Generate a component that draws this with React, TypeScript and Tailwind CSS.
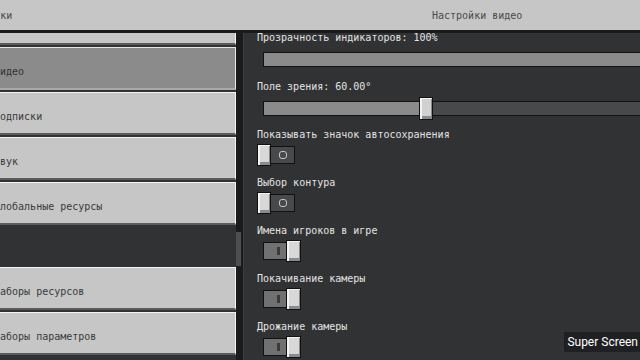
const mono = "font-['DejaVu_Sans_Mono','Liberation_Mono',monospace]";

type NavItem = { label: string; selected?: boolean };

const topItems: NavItem[] = [
  { label: "Видео", selected: true },
  { label: "Подписки" },
  { label: "Звук" },
  { label: "Глобальные ресурсы" },
];

const bottomItems: NavItem[] = [{ label: "Наборы ресурсов" }, { label: "Наборы параметров" }];

function NavButton({ label, selected }: NavItem) {
  return (
    <div
      className={
        selected
          ? "flex h-[43px] items-center overflow-hidden border-t border-r border-b-2 border-t-[#e6e6e6] border-r-[#e6e6e6] border-b-[#a9a9a9] bg-[#8b8b8b] text-[#333333]"
          : "flex h-[43px] items-center overflow-hidden border-t border-r border-b-2 border-t-[#f4f4f4] border-r-[#f4f4f4] border-b-[#5a5b5c] bg-[#c6c6c6] text-[#3a3a3a]"
      }
    >
      <span className="-ml-[6px] pt-[8px] whitespace-nowrap">{label}</span>
    </div>
  );
}

function Label({ text }: { text: string }) {
  return <div className="h-[12px] whitespace-nowrap text-[#e4e4e4]">{text}</div>;
}

function Slider({ fill, handleAt }: { fill: number; handleAt?: number }) {
  return (
    <div className="relative ml-[6px] mt-[4px] h-[23px] w-[420px]">
      <div className="absolute left-0 right-0 top-[4px] flex h-[15px] border border-[#111111] bg-[#48494a]">
        <div className="h-full bg-[#8b8b8b]" style={{ width: fill }} />
      </div>
      {handleAt !== undefined && (
        <div
          className="absolute top-0 h-[23px] w-[14px] border border-[#111111] bg-[#d0d0d1] shadow-[inset_2px_1px_0_#f4f4f4,inset_-1px_-3px_0_#8b8b8b]"
          style={{ left: handleAt }}
        />
      )}
    </div>
  );
}

function Toggle({ on }: { on: boolean }) {
  return (
    <div className="relative mt-[3px] h-[22px] w-[44px]">
      {on ? (
        <>
          <div className="absolute left-[6px] top-[2px] flex h-[18px] w-[25px] items-center border border-[#111111] bg-[#717171]">
            <div className="ml-[13px] h-[8px] w-[3px] bg-[#3a3a3a]" />
          </div>
          <div className="absolute left-[29px] top-0 h-[22px] w-[15px] border border-[#111111] bg-[#d8d8d8] shadow-[inset_2px_1px_0_#f4f4f4,inset_-1px_-3px_0_#8b8b8b]" />
        </>
      ) : (
        <>
          <div className="absolute left-[13px] top-[2px] flex h-[18px] w-[25px] items-center justify-center border border-[#111111] bg-[#48494a]">
            <div className="h-[8px] w-[8px] rounded-[3px] border border-[#c6c6c6]" />
          </div>
          <div className="absolute left-0 top-0 h-[22px] w-[14px] border border-[#111111] bg-[#d8d8d8] shadow-[inset_2px_1px_0_#f4f4f4,inset_-1px_-3px_0_#8b8b8b]" />
        </>
      )}
    </div>
  );
}

export default function App() {
  return (
    <div className={`relative h-[360px] w-[640px] overflow-hidden bg-[#313233] text-[10px] leading-[12px] ${mono}`}>
      <header className="flex h-[33px] border-b-[3px] border-[#1b1b1c] bg-[#c6c6c6] text-[#4a4a4a]">
        <div className="flex w-[243px] items-center overflow-hidden pt-[2px]">
          <span className="-ml-[42px] whitespace-nowrap">Настройки</span>
        </div>
        <div className="flex items-center pl-[189px] pt-[2px] whitespace-nowrap">Настройки видео</div>
      </header>

      <div className="flex h-[327px]">
        <nav className="flex w-[236px] flex-col gap-[2px] overflow-hidden">
          <div className="h-[12px] border-r border-b-2 border-r-[#f4f4f4] border-b-[#5a5b5c] bg-[#c6c6c6]" />
          {topItems.map((item) => (
            <NavButton key={item.label} {...item} />
          ))}
          <div className="h-[38px] shrink-0" />
          {bottomItems.map((item) => (
            <NavButton key={item.label} {...item} />
          ))}
        </nav>

        <div className="flex w-[7px] flex-col border-r border-[#1b1b1c] bg-[#1b1b1c]">
          <div className="mt-[199px] h-[34px] w-[5px] bg-[#4e4f50]" />
        </div>

        <section className="flex-1 overflow-hidden border-l border-[#3c3d3e] pl-[13px]">
          <div className="-mt-[1px] flex flex-col">
            <Label text="Прозрачность индикаторов: 100%" />
            <Slider fill={420} />

            <div className="mt-[10px]">
              <Label text="Поле зрения: 60.00°" />
            </div>
            <Slider fill={158} handleAt={156} />

            <div className="mt-[9px]">
              <Label text="Показывать значок автосохранения" />
            </div>
            <Toggle on={false} />

            <div className="mt-[11px]">
              <Label text="Выбор контура" />
            </div>
            <Toggle on={false} />

            <div className="mt-[11px]">
              <Label text="Имена игроков в игре" />
            </div>
            <Toggle on />

            <div className="mt-[11px]">
              <Label text="Покачивание камеры" />
            </div>
            <Toggle on />

            <div className="mt-[11px]">
              <Label text="Дрожание камеры" />
            </div>
            <Toggle on />
          </div>
        </section>
      </div>

      <div className="absolute right-0 top-[332px] flex h-[20px] items-center bg-[#1f2023] pl-[3px] pr-[2px] font-['Roboto','Liberation_Sans',sans-serif] text-[12px] leading-[14px] text-white">
        Super Screen
      </div>
    </div>
  );
}
